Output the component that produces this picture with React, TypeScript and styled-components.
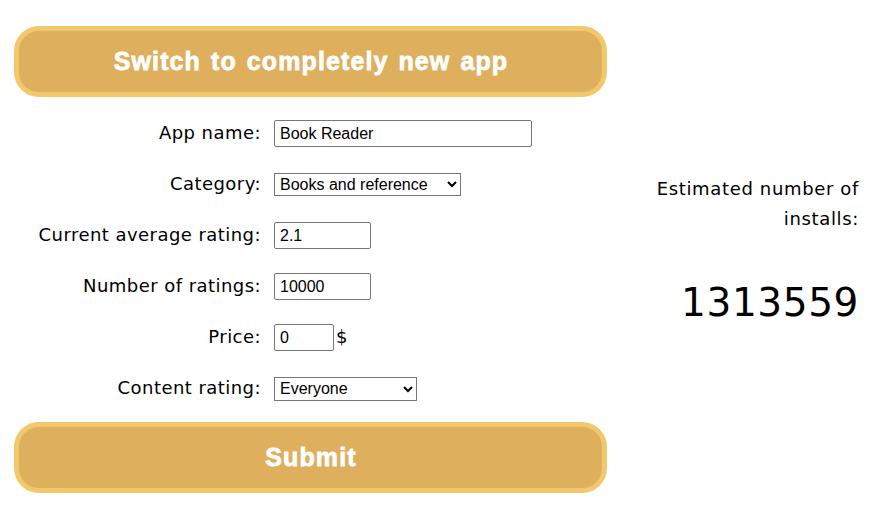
import React from "react";
import styled, { createGlobalStyle } from "styled-components";

const GlobalStyle = createGlobalStyle`
  html, body {
    margin: 0;
    padding: 0;
    background: #ffffff;
  }
  body {
    font-family: "DejaVu Sans", "Noto Sans", sans-serif;
    color: #000000;
  }
`;

const Page = styled.div`
  display: flex;
  align-items: flex-start;
  justify-content: space-between;
  padding: 26px 35px 0 14px;
  box-sizing: border-box;
  width: 894px;
`;

const LeftColumn = styled.div`
  width: 593px;
  display: flex;
  flex-direction: column;
`;

const PillButton = styled.button`
  box-sizing: border-box;
  width: 100%;
  height: 71px;
  border: 5px solid #f1c96c;
  border-radius: 25px;
  background: #deaf5c;
  color: #ffffff;
  font-family: "Liberation Sans", Arial, sans-serif;
  font-weight: 700;
  font-size: 25px;
  letter-spacing: 1.1px;
  word-spacing: 2px;
  -webkit-text-stroke: 0.8px #ffffff;
  cursor: pointer;
  padding: 0 0 0 1px;
  display: flex;
  align-items: center;
  justify-content: center;
`;

const Form = styled.form`
  display: flex;
  flex-direction: column;
  margin: 11px 0 8px;
`;

const Row = styled.div`
  display: grid;
  grid-template-columns: 247px 1fr;
  column-gap: 13px;
  align-items: center;
  height: 51px;
`;

const Label = styled.label`
  text-align: right;
  font-family: "DejaVu Sans", sans-serif;
  font-size: 18px;
  letter-spacing: 0.45px;
  line-height: 20px;
  padding-bottom: 2px;
  color: #000000;
`;

const Control = styled.div`
  display: flex;
  align-items: center;
  gap: 2px;
`;

const TextInput = styled.input<{ $width: number }>`
  box-sizing: border-box;
  width: ${(p) => p.$width}px;
  height: 27px;
  border: 1px solid #767676;
  border-radius: 2px;
  padding: 1px 5px;
  margin: 0;
  font-family: "Liberation Sans", Arial, sans-serif;
  font-size: 16px;
  color: #000000;
  background: #ffffff;
  outline: none;
`;

const Select = styled.select<{ $width: number; $height: number }>`
  box-sizing: border-box;
  width: ${(p) => p.$width}px;
  height: ${(p) => p.$height}px;
  border: 1px solid #767676;
  border-radius: 0;
  padding: 0 1px;
  margin: 0;
  font-family: "Liberation Sans", Arial, sans-serif;
  font-size: 16px;
  color: #000000;
  background: #ffffff;
`;

const Unit = styled.span`
  font-family: "DejaVu Sans", sans-serif;
  font-size: 18px;
  color: #000000;
  padding-bottom: 2px;
`;

const ResultPanel = styled.div`
  display: flex;
  flex-direction: column;
  align-items: flex-end;
  text-align: right;
  padding-top: 148px;
`;

const ResultLabel = styled.div`
  font-family: "DejaVu Sans", sans-serif;
  font-size: 18px;
  letter-spacing: 0.65px;
  line-height: 30px;
  width: 215px;
  color: #000000;
`;

const ResultValue = styled.div`
  margin-top: 46px;
  font-family: "DejaVu Sans", sans-serif;
  font-size: 39px;
  letter-spacing: 0.6px;
  line-height: 46px;
  color: #000000;
`;

export default function App() {
  return (
    <>
      <GlobalStyle />
      <Page>
        <LeftColumn>
          <PillButton type="button">Switch to completely new app</PillButton>
          <Form onSubmit={(e) => e.preventDefault()}>
            <Row>
              <Label htmlFor="appname">App name:</Label>
              <Control>
                <TextInput id="appname" $width={258} defaultValue="Book Reader" />
              </Control>
            </Row>
            <Row>
              <Label htmlFor="category">Category:</Label>
              <Control>
                <Select id="category" $width={187} $height={23} defaultValue="books">
                  <option value="books">Books and reference</option>
                  <option value="games">Games</option>
                  <option value="tools">Tools</option>
                </Select>
              </Control>
            </Row>
            <Row>
              <Label htmlFor="rating">Current average rating:</Label>
              <Control>
                <TextInput id="rating" $width={97} defaultValue="2.1" />
              </Control>
            </Row>
            <Row>
              <Label htmlFor="count">Number of ratings:</Label>
              <Control>
                <TextInput id="count" $width={97} defaultValue="10000" />
              </Control>
            </Row>
            <Row>
              <Label htmlFor="price">Price:</Label>
              <Control>
                <TextInput id="price" $width={60} defaultValue="0" />
                <Unit>$</Unit>
              </Control>
            </Row>
            <Row>
              <Label htmlFor="content">Content rating:</Label>
              <Control>
                <Select id="content" $width={143} $height={24} defaultValue="everyone">
                  <option value="everyone">Everyone</option>
                  <option value="teen">Teen</option>
                  <option value="mature">Mature 17+</option>
                </Select>
              </Control>
            </Row>
          </Form>
          <PillButton type="button">Submit</PillButton>
        </LeftColumn>
        <ResultPanel>
          <ResultLabel>Estimated number of installs:</ResultLabel>
          <ResultValue>1313559</ResultValue>
        </ResultPanel>
      </Page>
    </>
  );
}
